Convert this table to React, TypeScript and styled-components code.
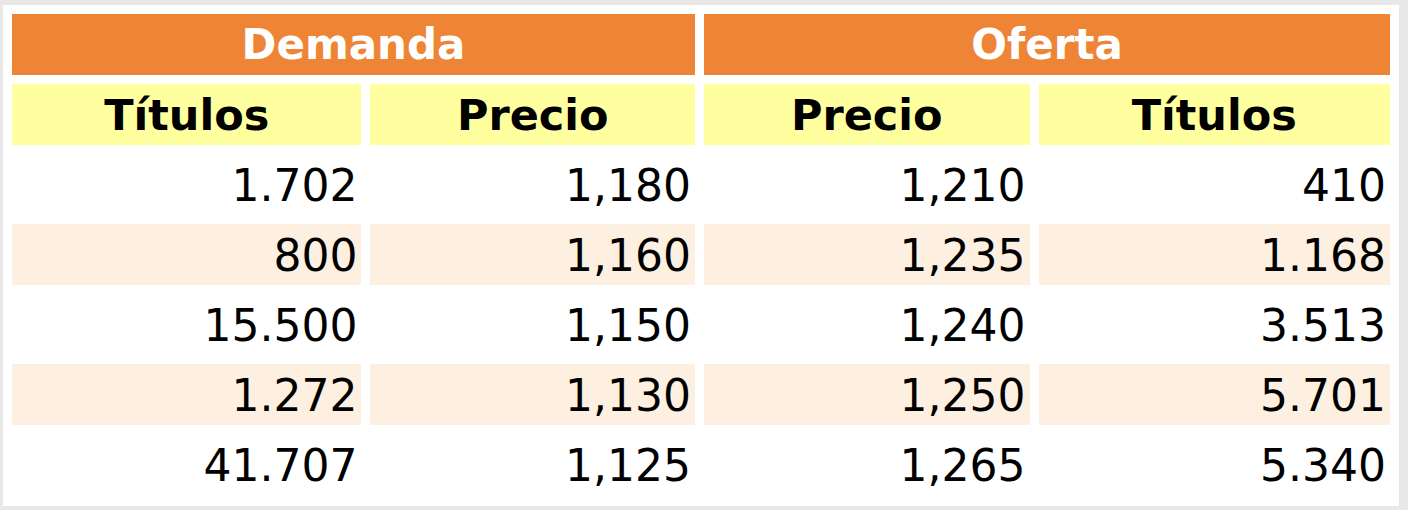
import React from 'react';
import styled, { createGlobalStyle } from 'styled-components';

const GlobalStyle = createGlobalStyle`
  html, body {
    margin: 0;
    padding: 0;
    background: #e8e8e8;
  }
  body {
    font-family: "DejaVu Sans", Verdana, sans-serif;
  }
`;

const Frame = styled.div`
  width: 1408px;
  height: 510px;
  box-sizing: border-box;
  padding: 4px 9px 5px 3px;
`;

const Panel = styled.div`
  background: #ffffff;
  height: 100%;
`;

const Book = styled.table`
  border-collapse: separate;
  border-spacing: 9px 9.4px;
  table-layout: fixed;
  margin-top: 0.6px;
`;

const GroupCell = styled.th`
  height: 61px;
  padding: 1px 0 0;
  box-sizing: border-box;
  background: #ee8536;
  color: #ffffff;
  font-size: 42px;
  font-weight: bold;
  text-align: center;
  vertical-align: middle;
`;

const ColumnCell = styled.th`
  height: 61px;
  padding: 2px 0 0;
  box-sizing: border-box;
  background: #ffffa0;
  color: #000000;
  font-size: 43px;
  font-weight: bold;
  text-align: center;
  vertical-align: middle;
`;

const ValueCell = styled.td<{ $shaded: boolean }>`
  height: 61px;
  padding: 4px 4px 0 0;
  box-sizing: border-box;
  background: ${props => (props.$shaded ? '#fdf0e0' : '#ffffff')};
  color: #000000;
  font-size: 44px;
  text-align: right;
  vertical-align: middle;
  line-height: 1;
`;

const widths = [350, 325, 326, 352];

const rows = [
  ['1.702', '1,180', '1,210', '410'],
  ['800', '1,160', '1,235', '1.168'],
  ['15.500', '1,150', '1,240', '3.513'],
  ['1.272', '1,130', '1,250', '5.701'],
  ['41.707', '1,125', '1,265', '5.340'],
];

const App = () => {
  return (
    <>
      <GlobalStyle />
      <Frame>
        <Panel>
          <Book>
            <colgroup>
              {widths.map((w, i) => (
                <col key={i} style={{ width: w }} />
              ))}
            </colgroup>
            <thead>
              <tr>
                <GroupCell colSpan={2}>Demanda</GroupCell>
                <GroupCell colSpan={2}>Oferta</GroupCell>
              </tr>
              <tr>
                <ColumnCell>Títulos</ColumnCell>
                <ColumnCell>Precio</ColumnCell>
                <ColumnCell>Precio</ColumnCell>
                <ColumnCell>Títulos</ColumnCell>
              </tr>
            </thead>
            <tbody>
              {rows.map((row, r) => (
                <tr key={r}>
                  {row.map((value, c) => (
                    <ValueCell key={c} $shaded={r % 2 === 1}>{value}</ValueCell>
                  ))}
                </tr>
              ))}
            </tbody>
          </Book>
        </Panel>
      </Frame>
    </>
  );
};

export default App;
